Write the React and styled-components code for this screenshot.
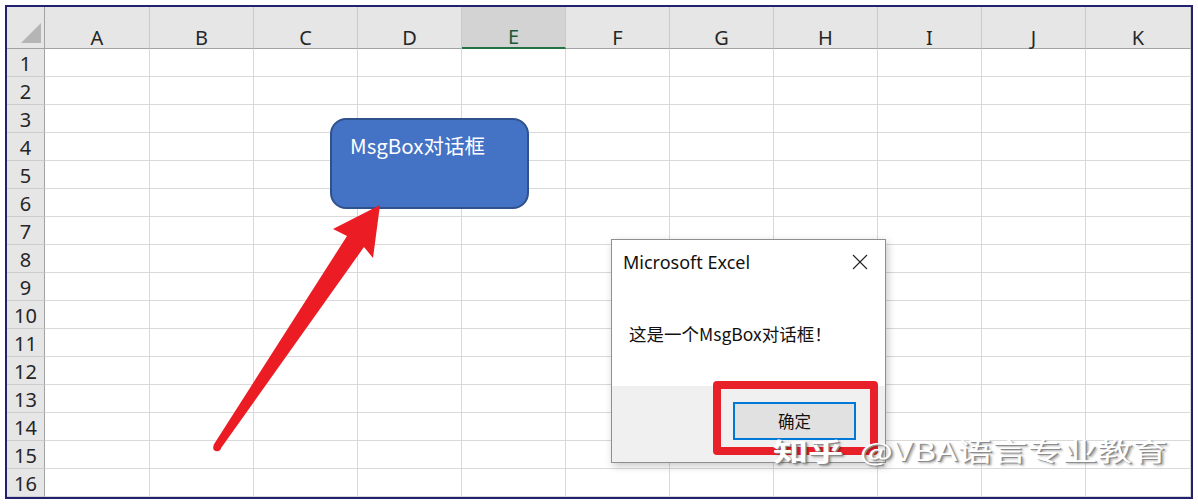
import React from 'react';
import styled, { createGlobalStyle } from 'styled-components';

const cols = ['A', 'B', 'C', 'D', 'E', 'F', 'G', 'H', 'I', 'J', 'K'];
const rows = Array.from({ length: 16 }, (_, i) => i + 1);
const font = `"Noto Sans", "Noto Sans CJK SC", "Liberation Sans", sans-serif`;
const cjk = `"Noto Sans CJK SC", "Noto Sans", sans-serif`;

const GlobalStyle = createGlobalStyle`
  html, body {
    margin: 0;
    padding: 0;
    background: #ffffff;
    font-family: ${font};
  }
  * { box-sizing: border-box; }
`;

const Page = styled.div`
  position: relative;
  width: 1198px;
  height: 504px;
  overflow: hidden;
  background: #ffffff;
`;

const Frame = styled.div`
  margin: 5px;
  width: 1188px;
  height: 494px;
  border: 2px solid #21216e;
  overflow: hidden;
`;

const Sheet = styled.div`
  display: grid;
  grid-template-columns: 38px 105px repeat(9, 104px) 105px;
  grid-template-rows: 42px repeat(16, 28px);
`;

const Corner = styled.div`
  position: relative;
  background: #e6e6e6;
  border-right: 1px solid #a3a3a3;
  border-bottom: 1px solid #a3a3a3;

  &::after {
    content: '';
    position: absolute;
    right: 3px;
    bottom: 5px;
    width: 20px;
    height: 20px;
    background: #b5b5b5;
    clip-path: polygon(100% 0, 100% 100%, 0 100%);
  }
`;

const ColHead = styled.div`
  display: flex;
  align-items: flex-end;
  justify-content: center;
  padding-bottom: 0;
  background: ${p => (p.$active ? '#d3d3d3' : '#e6e6e6')};
  color: ${p => (p.$active ? '#1d5a39' : '#262626')};
  border-right: 1px solid #cacaca;
  border-bottom: ${p => (p.$active ? '2px solid #217346' : '1px solid #a3a3a3')};
  font-size: 20px;
  line-height: 21px;
`;

const RowHead = styled.div`
  display: flex;
  align-items: center;
  justify-content: center;
  padding-top: 3px;
  background: #e6e6e6;
  color: #262626;
  border-right: 1px solid #a3a3a3;
  border-bottom: 1px solid #cdcdcd;
  font-size: 20px;
  line-height: 1;
`;

const Cell = styled.div`
  background: #ffffff;
  border-right: 1px solid #d9d9d9;
  border-bottom: 1px solid #d9d9d9;
`;

const Shape = styled.div`
  position: absolute;
  left: 330px;
  top: 118px;
  width: 199px;
  height: 91px;
  padding: 12px 0 0 18px;
  background: #4472c4;
  border: 2px solid #2f528f;
  border-radius: 16px;
  color: #ffffff;
  font-family: ${cjk};
  font-size: 20.5px;
  line-height: 26px;
`;

const Arrow = styled.svg`
  position: absolute;
  left: 0;
  top: 0;
  pointer-events: none;
`;

const Dialog = styled.div`
  position: absolute;
  left: 611px;
  top: 239px;
  width: 275px;
  height: 224px;
  display: flex;
  flex-direction: column;
  background: #ffffff;
  border: 1px solid #8f8f8f;
  box-shadow: 2px 3px 8px rgba(0, 0, 0, 0.22);
`;

const TitleBar = styled.div`
  height: 44px;
  display: flex;
  align-items: center;
  justify-content: space-between;
  padding: 0 17px 0 11px;
`;

const Title = styled.span`
  font-family: ${font};
  font-size: 18px;
  color: #111111;
`;

const Body = styled.div`
  flex: 1;
  display: flex;
  align-items: center;
  padding: 0 0 4px 17px;
  font-family: ${cjk};
  font-size: 17.5px;
  color: #111111;
`;

const Footer = styled.div`
  height: 76px;
  display: flex;
  justify-content: flex-end;
  align-items: flex-start;
  padding: 16px 29px 0 0;
  background: #f0f0f0;
`;

const OkButton = styled.button`
  width: 123px;
  height: 38px;
  background: #e1e1e1;
  border: 2px solid #0078d7;
  font-family: ${cjk};
  font-size: 16.5px;
  color: #111111;
  padding: 0;
`;

const Highlight = styled.div`
  position: absolute;
  left: 713px;
  top: 381px;
  width: 165px;
  height: 74px;
  border: 8px solid #e8202a;
  border-radius: 4px;
`;

const Watermark = styled.div`
  position: absolute;
  left: 773px;
  top: 435px;
  white-space: nowrap;
  font-family: ${cjk};
  font-size: 25px;
  line-height: 30px;
  color: #ffffff;
  transform: scaleX(1.4);
  transform-origin: left center;
  text-shadow: 1px 1px 0 #8c8c8c, 2px 2px 2px rgba(0, 0, 0, 0.35);
`;

const Strong = styled.span`
  font-weight: 700;
  margin-right: 12px;
`;

function CloseIcon() {
  return (
    <svg width="16" height="16" viewBox="0 0 16 16">
      <path d="M1 1 L15 15 M15 1 L1 15" stroke="#222" strokeWidth="1.1" fill="none" />
    </svg>
  );
}

export default function App() {
  return (
    <Page>
      <GlobalStyle />
      <Frame>
        <Sheet>
          <Corner />
          {cols.map(c => (
            <ColHead key={c} $active={c === 'E'}>{c}</ColHead>
          ))}
          {rows.map(r => (
            <React.Fragment key={r}>
              <RowHead>{r}</RowHead>
              {cols.map(c => <Cell key={c} />)}
            </React.Fragment>
          ))}
        </Sheet>
      </Frame>

      <Shape>MsgBox对话框</Shape>

      <Arrow width="1198" height="504" viewBox="0 0 1198 504">
        <polygon
          points="380,205 373,258 364,247 220,449.5 213.5,445 347,236 333,229"
          fill="#ec1c24"
        />
        <circle cx="217" cy="447.5" r="3.8" fill="#ec1c24" />
      </Arrow>

      <Dialog>
        <TitleBar>
          <Title>Microsoft Excel</Title>
          <CloseIcon />
        </TitleBar>
        <Body>这是一个MsgBox对话框！</Body>
        <Footer>
          <OkButton>确定</OkButton>
        </Footer>
      </Dialog>

      <Highlight />

      <Watermark>
        <Strong>知乎</Strong>@VBA语言专业教育
      </Watermark>
    </Page>
  );
}
